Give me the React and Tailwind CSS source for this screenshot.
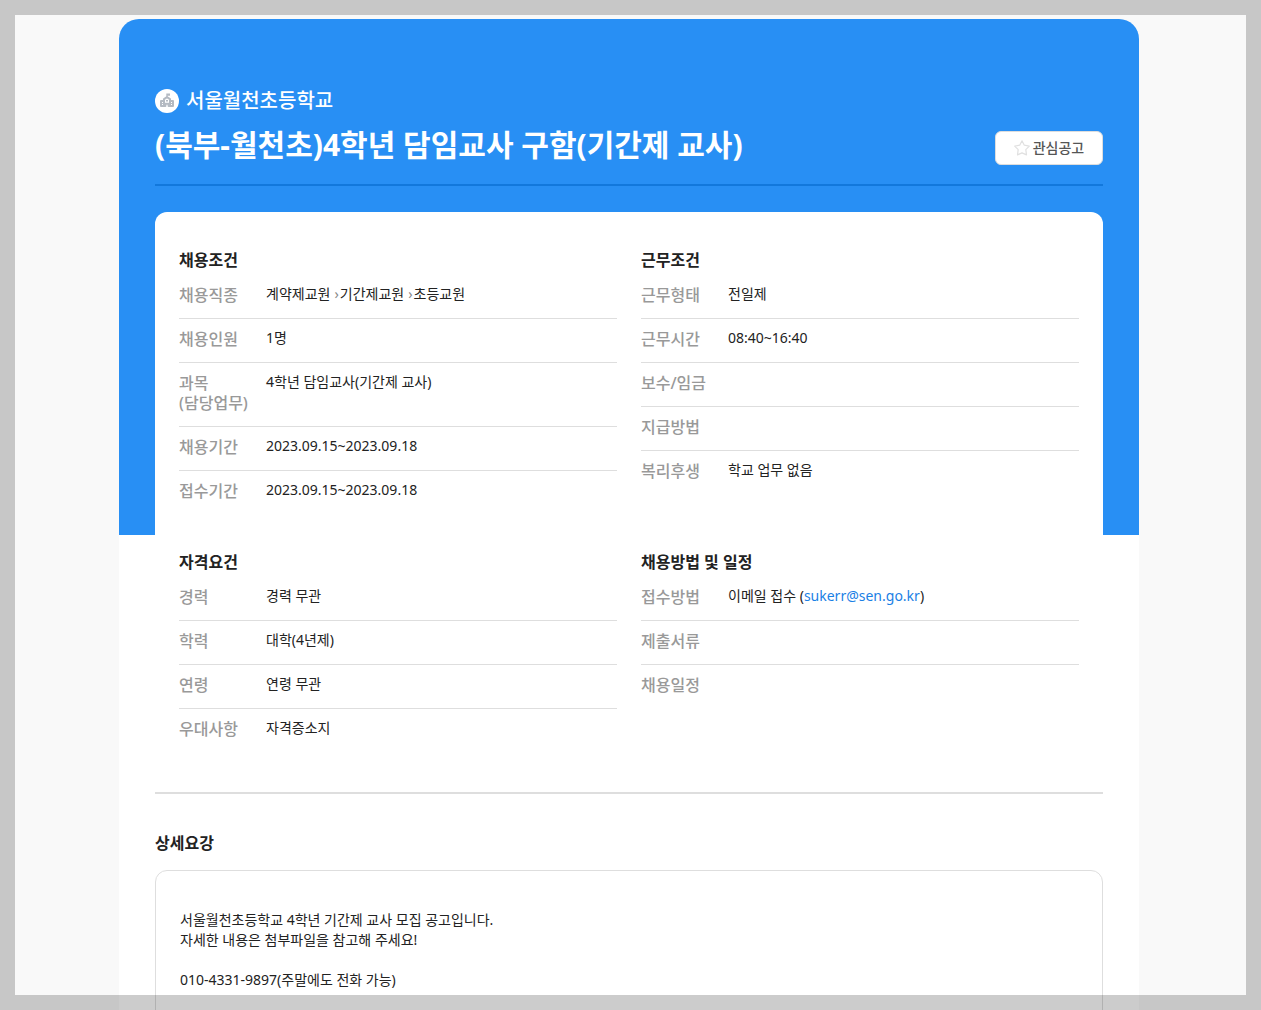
const conditions = [
  {
    title: "채용조건",
    rows: [
      { label: "채용직종", path: ["계약제교원", "기간제교원", "초등교원"] },
      { label: "채용인원", value: "1명" },
      { label: "과목", sub: "(담당업무)", value: "4학년 담임교사(기간제 교사)" },
      { label: "채용기간", value: "2023.09.15~2023.09.18" },
      { label: "접수기간", value: "2023.09.15~2023.09.18" },
    ],
  },
  {
    title: "근무조건",
    rows: [
      { label: "근무형태", value: "전일제" },
      { label: "근무시간", value: "08:40~16:40" },
      { label: "보수/임금" },
      { label: "지급방법" },
      { label: "복리후생", value: "학교 업무 없음" },
    ],
  },
  {
    title: "자격요건",
    rows: [
      { label: "경력", value: "경력 무관" },
      { label: "학력", value: "대학(4년제)" },
      { label: "연령", value: "연령 무관" },
      { label: "우대사항", value: "자격증소지" },
    ],
  },
  {
    title: "채용방법 및 일정",
    rows: [
      { label: "접수방법", value: "이메일 접수 ", email: "sukerr@sen.go.kr" },
      { label: "제출서류" },
      { label: "채용일정" },
    ],
  },
];

function SchoolIcon() {
  return (
    <svg className="size-6 shrink-0" viewBox="0 0 24 24" aria-hidden="true">
      <circle cx="12" cy="12" r="12" fill="#fff" />
      <g fill="none" stroke="#b4bac2" strokeWidth="2" strokeLinejoin="round">
        <path d="M9 17V10.200L12 8.200l3 2V17" />
        <path d="M9 12H6v5h4.400v-2.200h3.200V17H18v-5h-3" />
      </g>
      <path fill="#b4bac2" d="M11.300 4.500H15v2.200h-2.400V8h-1.300zM11 11h2v1.600h-2zM6 13.900h2v1.200H6zM16 13.900h2v1.200h-2z" />
    </svg>
  );
}

function StarIcon() {
  return (
    <svg className="size-4 shrink-0" viewBox="0 0 16 16" fill="none" stroke="#e0e0e0" strokeWidth="1.2" strokeLinejoin="round" aria-hidden="true">
      <path d="M8 .8 10.300 5.200 15.300 6.100 11.800 9.700 12.500 14.900 8 12.900 3.500 14.900 4.200 9.700.7 6.100 5.700 5.200z" />
    </svg>
  );
}

function Value({ row }) {
  if (row.path) {
    return row.path.map((part, i) => (
      <span key={part}>
        {i > 0 && <span className="ml-1 mr-px text-[#888]">›</span>}
        {part}
      </span>
    ));
  }
  return (
    <>
      {row.value}
      {row.email && (
        <>
          (<a href={`mailto:${row.email}`} className="text-[#1a80e5]">{row.email}</a>)
        </>
      )}
    </>
  );
}

function Section({ title, rows }) {
  return (
    <section>
      <h2 className="mb-[5px] text-base leading-5 font-bold text-[#222]">{title}</h2>
      <dl>
        {rows.map((row) => (
          <div key={row.label} className="flex border-b border-[#dedede] pt-2.5 pb-[13px] last:border-b-0">
            <dt className="w-[87px] shrink-0 text-base leading-5 font-medium whitespace-nowrap text-[#999]">
              {row.label}
              {row.sub && <span className="block">{row.sub}</span>}
            </dt>
            <dd className="min-w-0 flex-1 text-sm leading-[18px] text-[#222]">
              <Value row={row} />
            </dd>
          </div>
        ))}
      </dl>
    </section>
  );
}

export default function App() {
  return (
    <div className="relative h-screen overflow-hidden bg-[#f9f9f9] pt-[19px] pr-[3px] font-['Noto_Sans','Noto_Sans_CJK_KR',sans-serif]">
      <main className="mx-auto min-h-screen max-w-[1020px] rounded-t-[20px] bg-[linear-gradient(#288ff4_516px,#fff_516px)] px-9 pt-[70px]">
        <header className="flex items-end justify-between border-b-2 border-[#1278dc] pb-[19px]">
          <div className="text-white">
            <p className="flex items-center gap-[7px] text-xl leading-6 font-medium">
              <SchoolIcon />
              서울월천초등학교
            </p>
            <h1 className="mt-3 text-[30px] leading-10 font-bold">(북부-월천초)4학년 담임교사 구함(기간제 교사)</h1>
          </div>
          <button type="button" className="flex h-[34px] w-[108px] items-center justify-center gap-[3px] rounded-md border border-[#ddd] bg-white text-sm font-medium text-[#555]">
            <StarIcon />
            관심공고
          </button>
        </header>
        <div className="mt-[26px] grid grid-cols-2 gap-x-6 gap-y-[38px] rounded-t-xl bg-white px-6 pt-[38px] pb-10">
          {conditions.map((section) => (
            <Section key={section.title} {...section} />
          ))}
        </div>
        <section className="border-t-2 border-[#dedede] pt-[39px]">
          <h2 className="text-base leading-5 font-bold text-[#222]">상세요강</h2>
          <div className="mt-[17px] min-h-[200px] rounded-xl border border-[#dedede] px-6 py-[39px] text-sm leading-5 text-[#222]">
            <p>서울월천초등학교 4학년 기간제 교사 모집 공고입니다.</p>
            <p>자세한 내용은 첨부파일을 참고해 주세요!</p>
            <p className="mt-5">010-4331-9897(주말에도 전화 가능)</p>
          </div>
        </section>
      </main>
      <div className="pointer-events-none absolute inset-0 border-[15px] border-black/20" />
    </div>
  );
}
